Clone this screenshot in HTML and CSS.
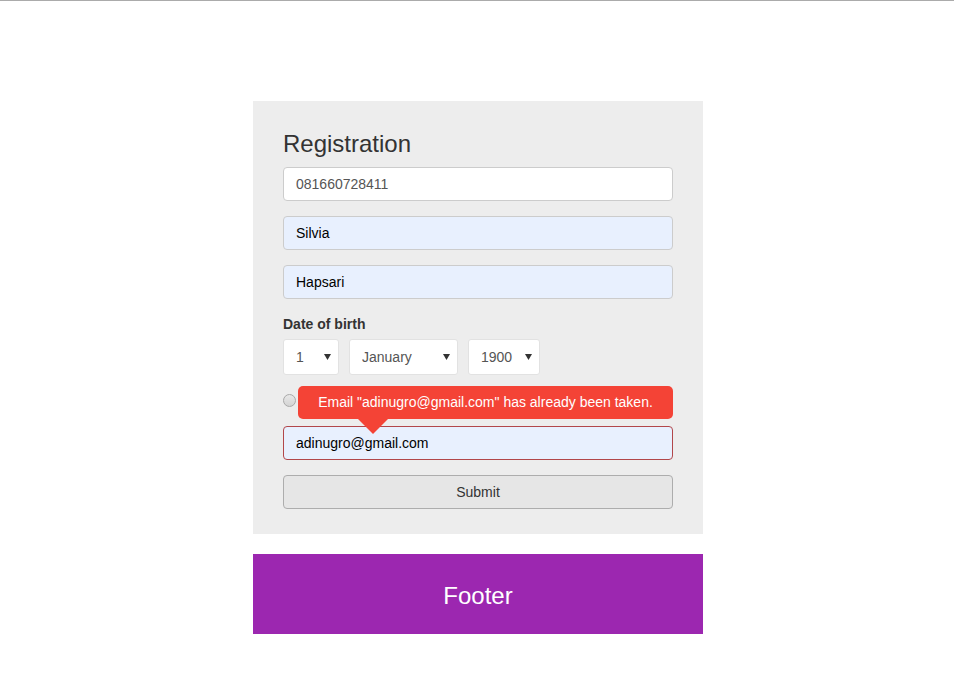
FILE: index.html
```html
<!DOCTYPE html>
<html>
<head>
<meta charset="utf-8">
<title>Registration</title>
<link rel="stylesheet" href="styles.css">
</head>
<body>
<div class="page">
  <form class="card">
    <h1 class="title">Registration</h1>
    <div class="group">
      <input class="field" type="text" value="081660728411">
    </div>
    <div class="group">
      <input class="field autofill" type="text" value="Silvia">
    </div>
    <div class="group">
      <input class="field autofill" type="text" value="Hapsari">
    </div>
    <div class="group">
      <label class="label">Date of birth</label>
      <div class="dob">
        <select class="sel sel-day"><option>1</option></select>
        <select class="sel sel-month"><option>January</option></select>
        <select class="sel sel-year"><option>1900</option></select>
      </div>
    </div>
    <div class="group radio-row">
      <input class="radio" type="radio" name="g">
      <div class="tooltip">Email "adinugro@gmail.com" has already been taken.</div>
    </div>
    <div class="group">
      <input class="field autofill invalid" type="text" value="adinugro@gmail.com">
    </div>
    <button class="submit" type="button">Submit</button>
  </form>
  <footer class="footer">Footer</footer>
</div>
</body>
</html>
```
FILE: styles.css
```css
html, body {
  margin: 0;
  padding: 0;
  background: #fff;
}
body {
  border-top: 1px solid #ababab;
  font-family: "Liberation Sans", Arial, sans-serif;
  font-size: 14px;
  color: #333;
}
.page {
  display: flex;
  flex-direction: column;
  align-items: center;
  padding-top: 100px;
  padding-left: 2px;
}
.card {
  width: 450px;
  box-sizing: border-box;
  background: #ededed;
  padding: 30px 30px 25px;
  margin: 0 0 20px;
}
.title {
  margin: 0 0 10px;
  font-size: 24px;
  line-height: 26px;
  font-weight: normal;
  color: #333;
}
.group {
  margin-bottom: 15px;
}
.field {
  display: block;
  width: 100%;
  box-sizing: border-box;
  height: 34px;
  padding: 6px 12px;
  font-family: "Liberation Sans", Arial, sans-serif;
  font-size: 14px;
  color: #555;
  background: #fff;
  border: 1px solid #ccc;
  border-radius: 4px;
  outline: none;
}
.autofill {
  background: #e8f0fe;
  color: #000;
}
.invalid {
  border-color: #b2474a;
}
.label {
  display: block;
  font-weight: bold;
  font-size: 14px;
  line-height: 20px;
  margin-bottom: 5px;
  color: #333;
}
.dob {
  display: flex;
  gap: 10px;
}
.sel {
  -webkit-appearance: none;
  appearance: none;
  height: 36px;
  box-sizing: border-box;
  padding: 0 0 0 12px;
  font-family: "Liberation Sans", Arial, sans-serif;
  font-size: 14px;
  color: #555;
  background-color: #fff;
  background-image: url("data:image/svg+xml;utf8,<svg xmlns='http://www.w3.org/2000/svg' width='7' height='6'><path d='M0 0H7L3.5 6Z' fill='%23333'/></svg>");
  background-repeat: no-repeat;
  background-position: right 7px center;
  border: 1px solid #e2e2e2;
  border-radius: 3px;
  outline: none;
}
.sel-day { width: 56px; }
.sel-month { width: 109px; }
.sel-year { width: 72px; }
.radio-row {
  position: relative;
  height: 21px;
  margin-top: 15px;
  display: flex;
  align-items: center;
}
.radio {
  -webkit-appearance: none;
  appearance: none;
  margin: 0;
  width: 13px;
  height: 13px;
  box-sizing: border-box;
  border-radius: 50%;
  border: 1px solid #a9a9a9;
  background: linear-gradient(#e8e8e8, #d4d4d4);
}
.tooltip {
  position: absolute;
  left: 15px;
  right: 0;
  top: -4px;
  height: 33px;
  line-height: 33px;
  background: #f44336;
  color: #fff;
  text-align: center;
  font-size: 14px;
  border-radius: 5px;
  z-index: 2;
}
.tooltip::after {
  content: "";
  position: absolute;
  left: 60px;
  top: 33px;
  border-left: 15px solid transparent;
  border-right: 15px solid transparent;
  border-top: 15px solid #f44336;
}
.submit {
  display: block;
  width: 100%;
  height: 34px;
  box-sizing: border-box;
  font-family: "Liberation Sans", Arial, sans-serif;
  font-size: 14px;
  color: #333;
  background: #e6e6e6;
  border: 1px solid #adadad;
  border-radius: 4px;
}
.footer {
  width: 450px;
  height: 80px;
  box-sizing: border-box;
  padding-top: 3px;
  background: #9c27b0;
  color: #fff;
  font-size: 24px;
  display: flex;
  align-items: center;
  justify-content: center;
}
```
